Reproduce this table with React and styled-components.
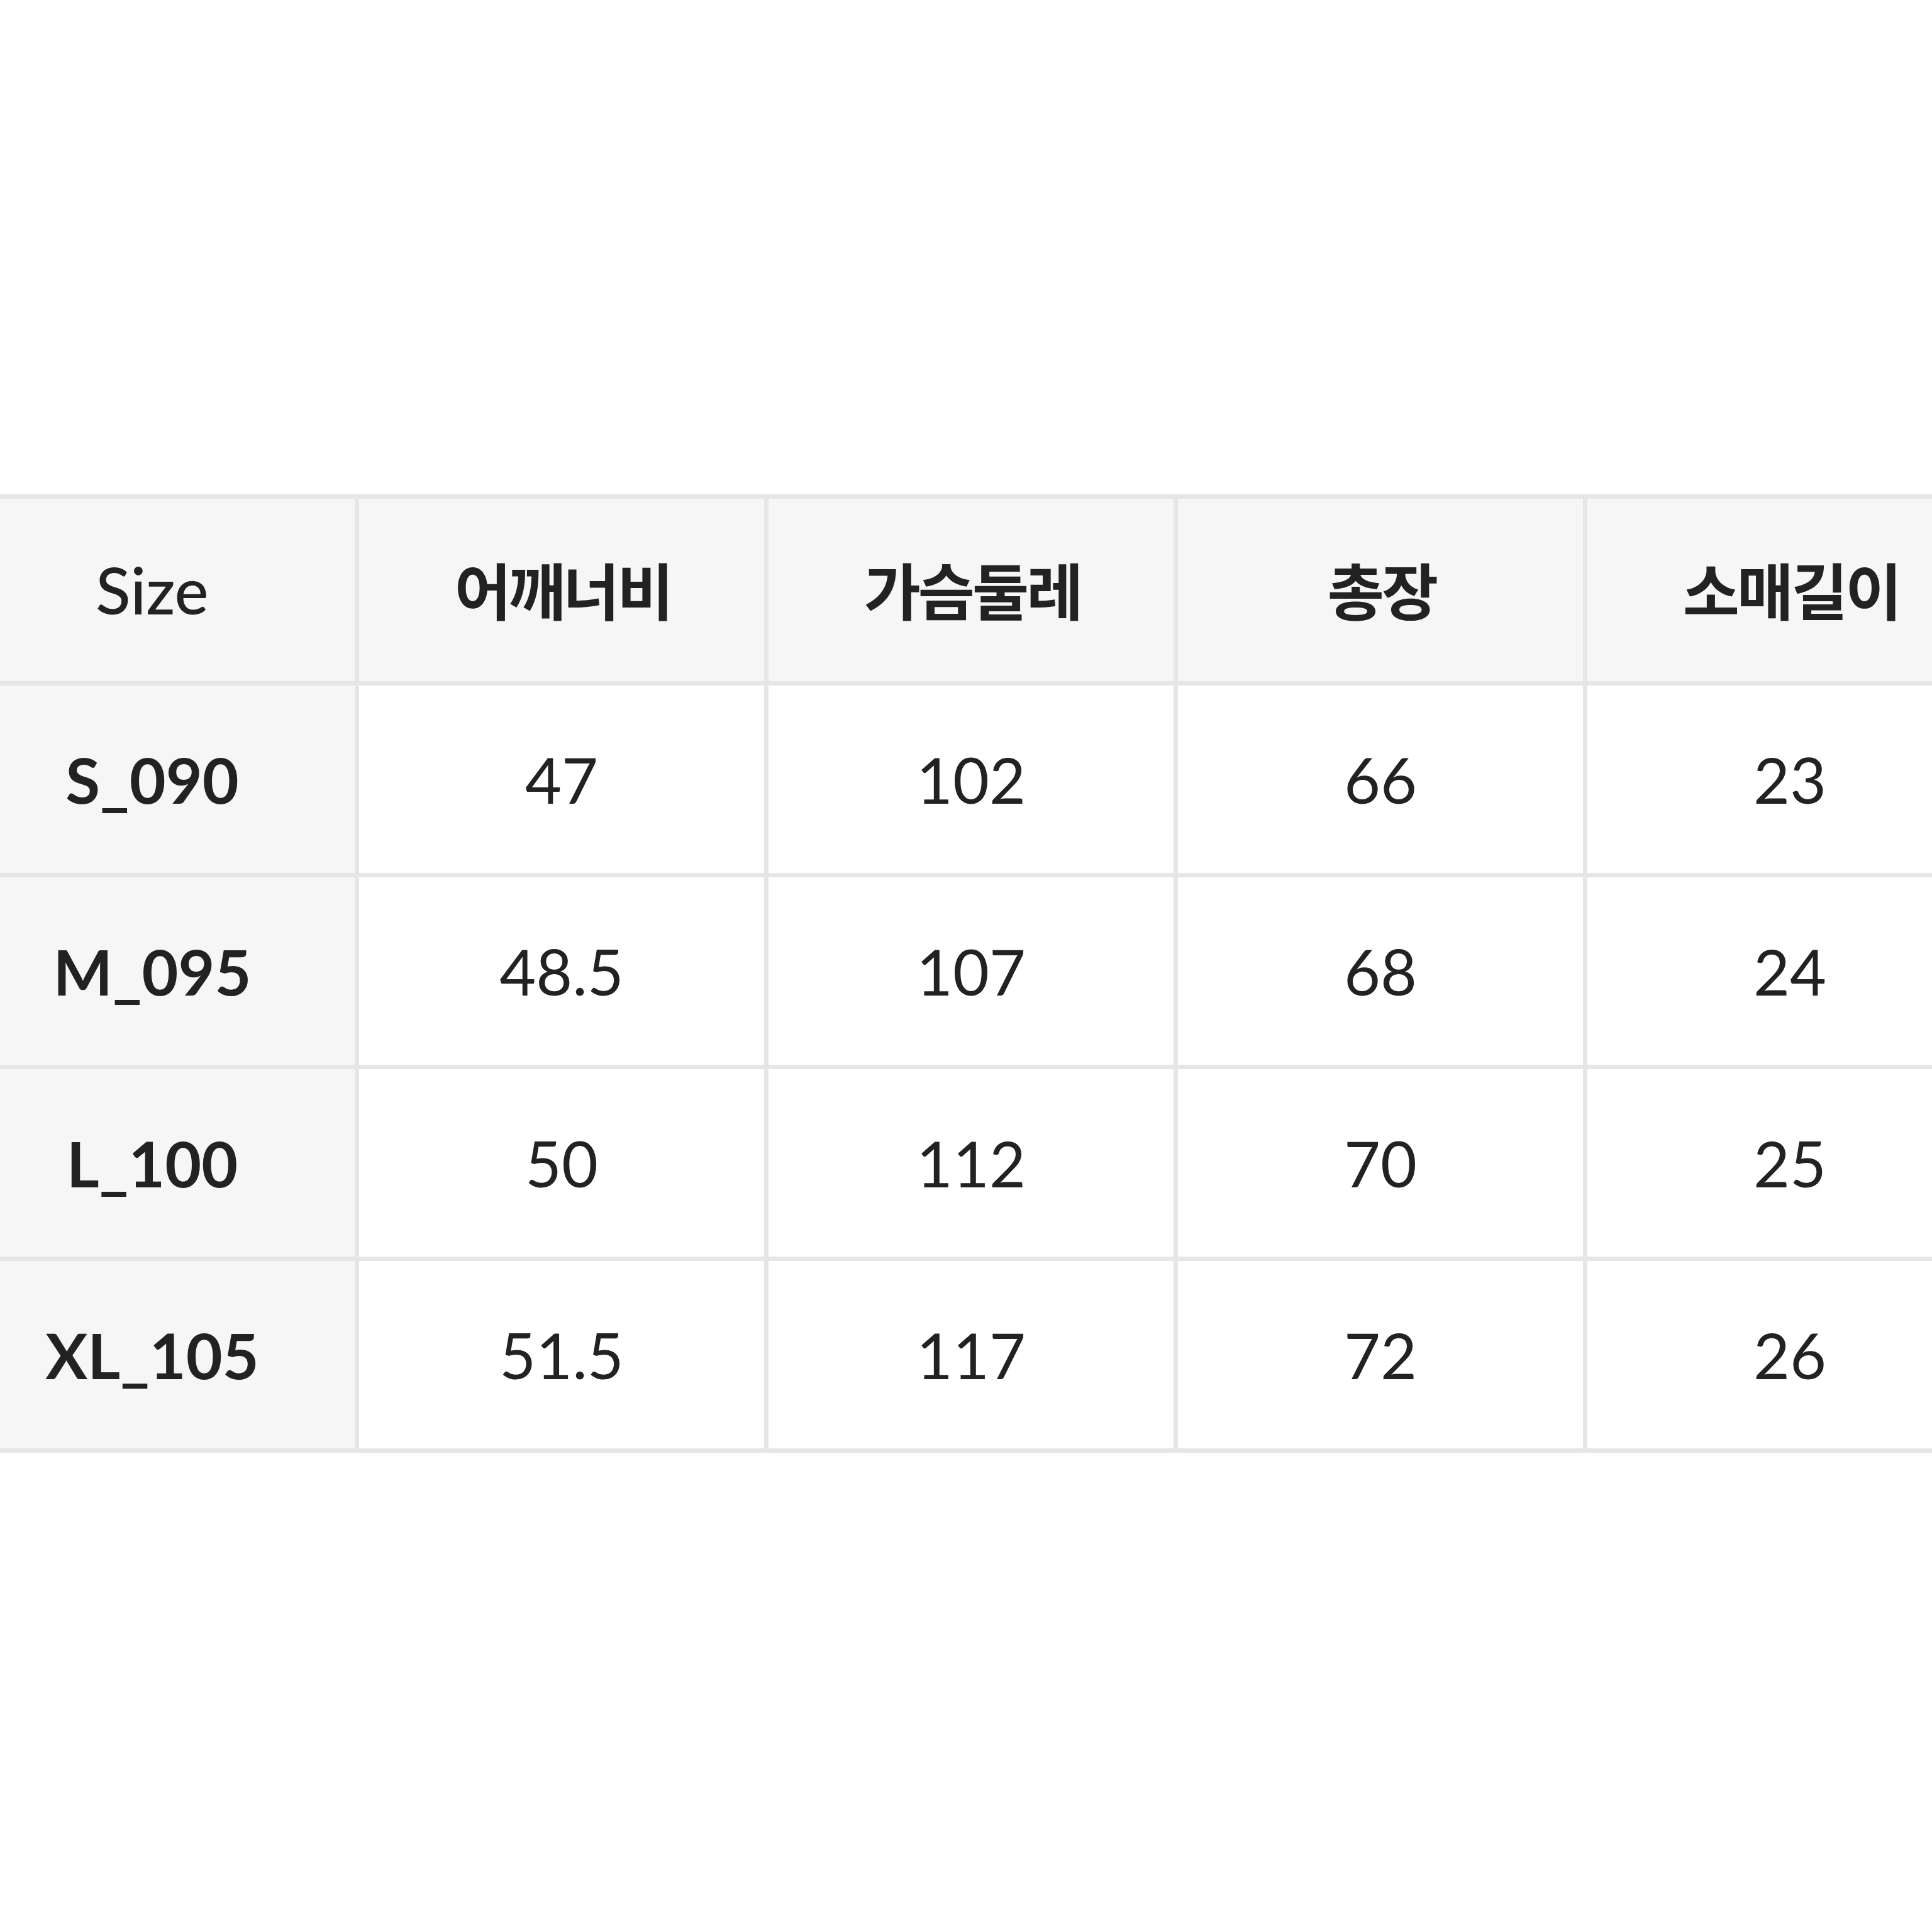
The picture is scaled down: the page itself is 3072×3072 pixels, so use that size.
import React from "react";
import styled, { createGlobalStyle } from "styled-components";

const GlobalStyle = createGlobalStyle`
  html, body {
    margin: 0;
    padding: 0;
    background: #ffffff;
  }
  body {
    width: 3072px;
    height: 3072px;
    overflow: hidden;
    font-family: Lato, "Noto Sans CJK KR", sans-serif;
    color: #222222;
  }
`;

const Page = styled.div`
  width: 3072px;
  height: 3072px;
  overflow: hidden;
  background: #ffffff;
  padding-top: 786px;
  box-sizing: border-box;
`;

const Table = styled.div`
  display: grid;
  grid-template-columns: repeat(5, 644px);
  grid-template-rows: 290px repeat(4, 298px);
  gap: 7px;
  padding: 7px;
  background: #e6e6e6;
  width: max-content;
  margin-left: -87px;
`;

const Cell = styled.div`
  display: flex;
  align-items: center;
  justify-content: center;
  background: ${(p) => (p.$shaded ? "#f6f6f6" : "#ffffff")};
  font-family: Lato, "Noto Sans CJK KR", sans-serif;
  font-size: 100px;
  font-weight: ${(p) => (p.$bold ? 700 : 400)};
  color: #222222;
  line-height: 1;
  white-space: nowrap;
`;

const HeadLabel = styled.span`
  font-family: "Noto Sans CJK KR", sans-serif;
  font-size: 98px;
  font-weight: 700;
  letter-spacing: -4px;
  padding-left: 4px;
  margin-bottom: 6px;
`;

const SizeLabel = styled.span`
  font-family: Lato, sans-serif;
  font-size: 102px;
  font-weight: 500;
`;

const headers = ["어깨너비", "가슴둘레", "총장", "소매길이"];
const rows = [
  ["S_090", "47", "102", "66", "23"],
  ["M_095", "48.5", "107", "68", "24"],
  ["L_100", "50", "112", "70", "25"],
  ["XL_105", "51.5", "117", "72", "26"],
];

export default function App() {
  return (
    <>
      <GlobalStyle />
      <Page>
        <Table>
          <Cell $shaded>
            <SizeLabel>Size</SizeLabel>
          </Cell>
          {headers.map((h) => (
            <Cell key={h} $shaded>
              <HeadLabel>{h}</HeadLabel>
            </Cell>
          ))}
          {rows.map((r) =>
            r.map((v, i) => (
              <Cell key={r[0] + i} $shaded={i === 0} $bold={i === 0}>
                {v}
              </Cell>
            ))
          )}
        </Table>
      </Page>
    </>
  );
}
